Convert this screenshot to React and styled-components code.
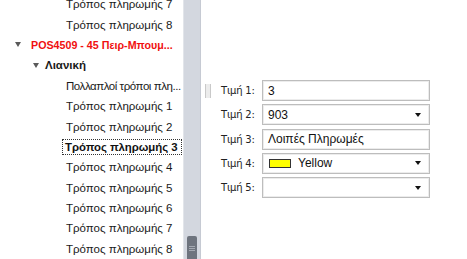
import React from "react";
import styled, { createGlobalStyle } from "styled-components";

const Global = createGlobalStyle`
  html, body { margin: 0; padding: 0; background: #fff; }
  body { font-family: "Liberation Sans", Arial, sans-serif; }
`;

const Root = styled.div`
  display: flex;
  width: 467px;
  height: 259px;
  overflow: hidden;
  background: #fff;
  font-family: "Liberation Sans", Arial, sans-serif;
  font-size: 11.5px;
  color: #1a1a1a;
`;

const TreePane = styled.div`
  width: 183px;
  flex: none;
  overflow: hidden;
`;

const TreeList = styled.div`
  display: flex;
  flex-direction: column;
  margin-top: -6px;
`;

const Row = styled.div`
  height: 20.4px;
  display: flex;
  align-items: center;
  padding-left: ${(p) => p.$indent}px;
  white-space: nowrap;
  font-weight: ${(p) => (p.$bold ? 700 : 400)};
  font-size: ${(p) => p.$size || 11.5}px;
  letter-spacing: ${(p) => p.$ls || 0}px;
  color: ${(p) => (p.$red ? "#f01010" : "#1a1a1a")};
`;

const Toggle = styled.span`
  display: inline-block;
  flex: none;
  width: 0;
  height: 0;
  border-left: 3.5px solid transparent;
  border-right: 3.5px solid transparent;
  border-top: 5px solid #5a5a5a;
  margin-left: ${(p) => p.$ml}px;
  margin-right: ${(p) => p.$mr}px;
`;

const Label = styled.span`
  display: inline-block;
  padding: 1px 3px;
  border: 1px dotted transparent;
`;

const FocusLabel = styled.span`
  display: inline-block;
  box-sizing: border-box;
  width: 120px;
  padding: 1px 2px;
  border: 1px dotted #333;
  font-weight: 700;
  font-size: 11.4px;
  color: #111;
  overflow: hidden;
`;

const ScrollBar = styled.div`
  width: 18px;
  flex: none;
  background: #d3d7df;
  border-left: 1px solid #e2e5ea;
  border-right: 1px solid #c6cad3;
  box-sizing: border-box;
  display: flex;
  flex-direction: column;
  justify-content: flex-end;
  align-items: center;
`;

const Thumb = styled.div`
  width: 10px;
  height: 25px;
  margin-bottom: -2px;
  border-radius: 2px;
  background: #6e747e;
  display: flex;
  flex-direction: column;
  align-items: center;
  justify-content: center;
  gap: 1px;
  & > i {
    display: block;
    width: 6px;
    height: 1px;
    background: #a4a9b2;
  }
`;

const RightPane = styled.div`
  flex: 1;
  display: flex;
`;

const GripCol = styled.div`
  width: 20px;
  flex: none;
  padding-top: 84px;
  padding-left: 4px;
  box-sizing: border-box;
`;

const Grip = styled.div`
  width: 4px;
  height: 14px;
  border-left: 1px solid #c9c9c9;
  border-right: 1px solid #c9c9c9;
  background: #ececec;
`;

const Form = styled.div`
  padding-top: 80px;
  display: grid;
  grid-template-columns: 41px 168px;
  grid-auto-rows: 21px;
  row-gap: 3.25px;
  align-items: center;
`;

const FieldLabel = styled.div`
  font-family: "DejaVu Sans", sans-serif;
  font-size: 10px;
  letter-spacing: -0.2px;
  color: #222;
`;

const Box = styled.div`
  height: 21px;
  box-sizing: border-box;
  border: 1px solid #bdbdbd;
  box-shadow: inset 0 0 0 1px #ececec;
  display: flex;
  align-items: center;
  padding-left: 5px;
  font-size: 12px;
  color: #111;
`;

const Val = styled.span`
  flex: 1;
`;

const Arrow = styled.span`
  width: 0;
  height: 0;
  border-left: 3.5px solid transparent;
  border-right: 3.5px solid transparent;
  border-top: 4px solid #111;
  margin-right: 8px;
`;

const Swatch = styled.span`
  width: 20px;
  height: 7px;
  background: #ffff00;
  border: 1px solid #333;
  margin: 0 7px 0 1px;
  flex: none;
`;

const tree = [
  { t: "Τρόπος πληρωμής 7", i: 62 },
  { t: "Τρόπος πληρωμής 8", i: 62 },
  { t: "POS4509 - 45 Πειρ-Μπουμ...", i: 0, bold: true, red: true, tog: [15, 9], size: 10.7 },
  { t: "Λιανική", i: 0, bold: true, tog: [33, 5] },
  { t: "Πολλαπλοί τρόποι πλη...", i: 62, ls: -0.45 },
  { t: "Τρόπος πληρωμής 1", i: 62 },
  { t: "Τρόπος πληρωμής 2", i: 62 },
  { t: "Τρόπος πληρωμής 3", i: 62, focus: true },
  { t: "Τρόπος πληρωμής 4", i: 62 },
  { t: "Τρόπος πληρωμής 5", i: 62 },
  { t: "Τρόπος πληρωμής 6", i: 62 },
  { t: "Τρόπος πληρωμής 7", i: 62 },
  { t: "Τρόπος πληρωμής 8", i: 62 },
];

const fields = [
  { l: "Τιμή 1:", v: "3" },
  { l: "Τιμή 2:", v: "903", dd: true },
  { l: "Τιμή 3:", v: "Λοιπές Πληρωμές" },
  { l: "Τιμή 4:", v: "Yellow", dd: true, sw: true },
  { l: "Τιμή 5:", v: "", dd: true },
];

export default function App() {
  return (
    <>
      <Global />
      <Root>
        <TreePane>
          <TreeList>
            {tree.map((r, k) => (
              <Row key={k} $indent={r.i} $bold={r.bold} $red={r.red} $size={r.size} $ls={r.ls}>
                {r.tog && <Toggle $ml={r.tog[0]} $mr={r.tog[1] - 3} />}
                {r.focus ? <FocusLabel>{r.t}</FocusLabel> : <Label>{r.t}</Label>}
              </Row>
            ))}
          </TreeList>
        </TreePane>
        <ScrollBar>
          <Thumb>
            <i />
            <i />
            <i />
          </Thumb>
        </ScrollBar>
        <RightPane>
          <GripCol>
            <Grip />
          </GripCol>
          <Form>
            {fields.map((f, k) => (
              <React.Fragment key={k}>
                <FieldLabel>{f.l}</FieldLabel>
                <Box>
                  {f.sw && <Swatch />}
                  <Val>{f.v}</Val>
                  {f.dd && <Arrow />}
                </Box>
              </React.Fragment>
            ))}
          </Form>
        </RightPane>
      </Root>
    </>
  );
}
